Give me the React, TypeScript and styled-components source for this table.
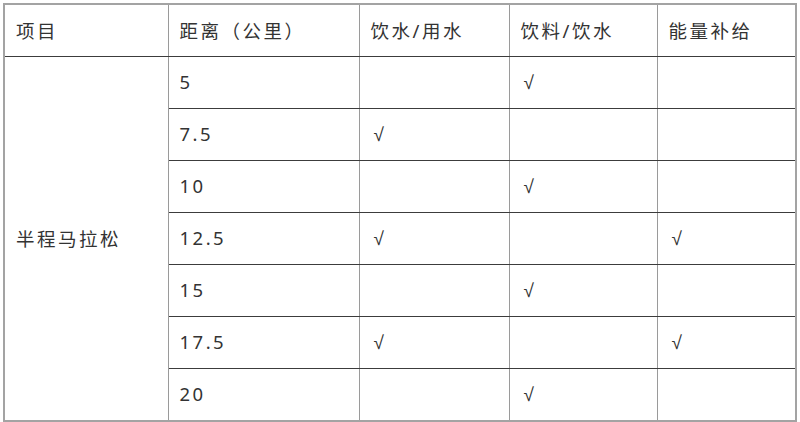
import styled, { createGlobalStyle } from "styled-components";

const GlobalStyle = createGlobalStyle`
	html, body {
		margin: 0;
		padding: 0;
		background: #ffffff;
	}
`;

const Wrap = styled.div`
	padding: 3px 5px 0 3px;
	font-family: "Noto Sans", "Noto Sans CJK SC", sans-serif;
	color: #333333;
`;

const Table = styled.table`
	width: 792px;
	border-collapse: collapse;
	border: 2px solid #a3a3a3;
	table-layout: fixed;
`;

const Cell = styled.td`
	height: 49px;
	padding: 0 0 2px 11px;
	font-size: 18.5px;
	letter-spacing: 2.5px;
	text-align: left;
	vertical-align: middle;
	border-left: 1px solid #9a9a9a;
	border-right: 1px solid #9a9a9a;
	border-top: 1px solid #3c3c3c;
	border-bottom: 1px solid #3c3c3c;
	font-weight: 400;
	white-space: nowrap;
`;

const HeadCell = styled(Cell).attrs({ as: "th" })``;

const Check = styled.span`
	font-family: "Liberation Sans", sans-serif;
	font-size: 19px;
	padding-left: 3px;
`;

const cols = [164, 191, 150, 148, 139];

const rows: [string, boolean, boolean, boolean][] = [
	["5", false, true, false],
	["7.5", true, false, false],
	["10", false, true, false],
	["12.5", true, false, true],
	["15", false, true, false],
	["17.5", true, false, true],
	["20", false, true, false],
];

const mark = (on: boolean) => (on ? <Check>√</Check> : null);

export default function App() {
	return (
		<Wrap>
			<GlobalStyle />
			<Table>
				<colgroup>
					{cols.map((w, i) => (
						<col key={i} style={{ width: w }} />
					))}
				</colgroup>
				<thead>
					<tr>
						<HeadCell>项目</HeadCell>
						<HeadCell>距离（公里）</HeadCell>
						<HeadCell>饮水/用水</HeadCell>
						<HeadCell>饮料/饮水</HeadCell>
						<HeadCell>能量补给</HeadCell>
					</tr>
				</thead>
				<tbody>
					{rows.map(([km, water, drink, energy], i) => (
						<tr key={km}>
							{i === 0 && <Cell rowSpan={rows.length}>半程马拉松</Cell>}
							<Cell>{km}</Cell>
							<Cell>{mark(water)}</Cell>
							<Cell>{mark(drink)}</Cell>
							<Cell>{mark(energy)}</Cell>
						</tr>
					))}
				</tbody>
			</Table>
		</Wrap>
	);
}
